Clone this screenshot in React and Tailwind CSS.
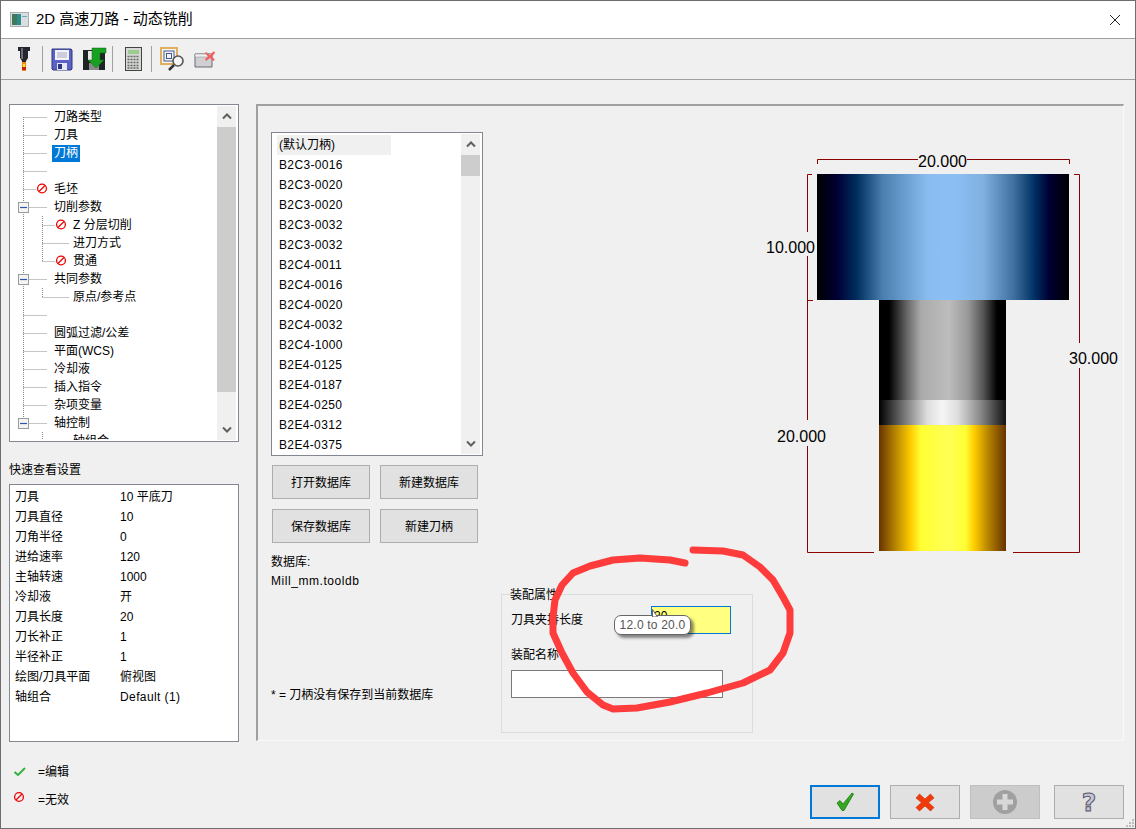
const treeRows = [
  { t: '刀路类型', first: true },
  { t: '刀具' },
  { t: '刀柄', selected: true },
  { t: '' },
  { t: '毛坯', bad: true },
  { t: '切削参数', box: true },
  { t: 'Z 分层切削', sub: true, bad: true, more: true },
  { t: '进刀方式', sub: true, more: true },
  { t: '贯通', sub: true, bad: true },
  { t: '共同参数', box: true },
  { t: '原点/参考点', sub: true },
  { t: '' },
  { t: '圆弧过滤/公差' },
  { t: '平面(WCS)' },
  { t: '冷却液' },
  { t: '插入指令' },
  { t: '杂项变量' },
  { t: '轴控制', box: true, end: true },
  { t: '轴组合', sub: true, tail: true },
];

const tools = ['B2C3-0016', 'B2C3-0020', 'B2C3-0020', 'B2C3-0032', 'B2C3-0032', 'B2C4-0011', 'B2C4-0016', 'B2C4-0020', 'B2C4-0032', 'B2C4-1000', 'B2E4-0125', 'B2E4-0187', 'B2E4-0250', 'B2E4-0312', 'B2E4-0375'];

const quickView = [
  ['刀具', '10 平底刀'],
  ['刀具直径', '10'],
  ['刀角半径', '0'],
  ['进给速率', '120'],
  ['主轴转速', '1000'],
  ['冷却液', '开'],
  ['刀具长度', '20'],
  ['刀长补正', '1'],
  ['半径补正', '1'],
  ['绘图/刀具平面', '俯视图'],
  ['轴组合', 'Default (1)'],
];

function NoEntry({ cx, cy }) {
  return (
    <g fill="none" stroke="#f00000" strokeWidth="1.3">
      <circle cx={cx} cy={cy} r="4.4" />
      <path d={`M${cx - 3} ${cy + 3}L${cx + 3} ${cy - 3}`} />
    </g>
  );
}

function TreeRow({ row }) {
  const width = row.sub ? 62 : 43;
  const dots = { stroke: '#8a8a8a', strokeDasharray: '1 1', fill: 'none' };
  return (
    <div className="flex h-[18px] items-center">
      <svg width={width} height="18" className="shrink-0">
        {!row.tail && <path d={`M12.5 ${row.first ? 9 : 0}V${row.end ? 9 : 18}`} {...dots} />}
        {row.sub ? (
          <>
            <path d={`M31.5 0V${row.more ? 18 : 9}`} {...dots} />
            <path d={`M31.5 9.5H${row.bad ? 44 : 58}`} {...dots} />
            {row.bad && <NoEntry cx={50} cy={8.5} />}
          </>
        ) : (
          <>
            <path d={`M12.5 9.5H${row.bad ? 25 : 36}`} {...dots} />
            {row.bad && <NoEntry cx={31} cy={8.5} />}
            {row.box && (
              <>
                <rect x="7.5" y="4.5" width="10" height="10" fill="#f4f4f4" stroke="#9a9a9a" />
                <path d="M9 9.5H16" stroke="#2f55a8" strokeWidth="1.2" />
              </>
            )}
          </>
        )}
      </svg>
      <span className={row.selected ? '-ml-[2px] bg-[#0078d7] px-[2px] leading-[17px] text-white' : 'whitespace-nowrap'}>{row.t}</span>
    </div>
  );
}

function Chevron({ up }) {
  return (
    <svg width="10" height="7" viewBox="0 0 10 7">
      <path d={up ? 'M1 5.5L5 1.5L9 5.5' : 'M1 1.5L5 5.5L9 1.5'} fill="none" stroke="#606060" strokeWidth="2" />
    </svg>
  );
}

function Scrollbar({ thumbHeight }) {
  return (
    <div className="flex w-[19px] shrink-0 flex-col bg-[#f0f0f0]">
      <div className="flex h-[21px] shrink-0 items-center justify-center"><Chevron up /></div>
      <div className="flex-1">
        <div className={`${thumbHeight} bg-[#cdcdcd]`} />
      </div>
      <div className="flex h-[21px] shrink-0 items-center justify-center"><Chevron /></div>
    </div>
  );
}

function TitleIcon() {
  return (
    <svg width="20" height="18" viewBox="0 0 20 18">
      <rect x="0.5" y="1.5" width="18" height="14" fill="#d9dee0" stroke="#a9adb0" />
      <rect x="2" y="3" width="9" height="11" fill="#2f8a8c" />
      <rect x="2" y="3" width="5" height="11" fill="#3d7a5a" />
      <rect x="12" y="5" width="5" height="1" fill="#68a8b0" />
    </svg>
  );
}

function ToolbarIcons() {
  return (
    <>
      <svg width="14" height="26" viewBox="0 0 14 26" className="ml-[16px]">
        <path d="M1 1H13V5H11V12L9 15V17H5V15L3 12V5H1Z" fill="#26262e" />
        <path d="M5 2V13" stroke="#6a6a78" strokeWidth="2" />
        <rect x="5" y="16" width="4" height="9" fill="#f08a10" />
        <rect x="6" y="18" width="2" height="5" fill="#ffe040" />
        <rect x="5" y="21" width="4" height="3" fill="#c02808" />
      </svg>
      <div className="ml-[11px] h-[26px] w-px bg-[#a0a0a0]" />
      <svg width="22" height="23" viewBox="0 0 22 23" className="ml-[8px]">
        <path d="M1 1H20L21 2V21L20 22H2L1 21Z" fill="#5a62c8" stroke="#30367e" />
        <rect x="4" y="2" width="14" height="10" fill="#f2f2f8" />
        <path d="M6 5H16M6 7H16M6 9H16" stroke="#a8a8c0" />
        <rect x="6" y="15" width="10" height="7" fill="#e8e8f4" />
        <rect x="7" y="16" width="4" height="5" fill="#30367e" />
      </svg>
      <svg width="24" height="24" viewBox="0 0 24 24" className="ml-[10px]">
        <path d="M0 3H22V23H0Z" fill="#1c2424" />
        <rect x="5" y="4" width="12" height="9" fill="#e8e8e8" />
        <rect x="6" y="16" width="10" height="7" fill="#8a8a8a" />
        <path d="M9 1H23V6H17V13H21L13 21L5 13H9Z" fill="#18a020" stroke="#0c6a18" strokeWidth="0.5" />
      </svg>
      <div className="ml-[5px] h-[26px] w-px bg-[#a0a0a0]" />
      <svg width="17" height="24" viewBox="0 0 17 24" className="ml-[12px]">
        <rect x="0.5" y="0.5" width="16" height="23" fill="#d6d8d4" stroke="#444" />
        <rect x="3" y="3" width="11" height="4" fill="#9ccb90" />
        <path d="M2.5 9.5H14.5M2.5 12.5H14.5M2.5 15.5H14.5M2.5 18.5H14.5M2.5 21H14.5" stroke="#666" strokeWidth="1.5" strokeDasharray="2 1" />
      </svg>
      <div className="ml-[9px] h-[26px] w-px bg-[#a0a0a0]" />
      <svg width="25" height="25" viewBox="0 0 25 25" className="ml-[8px]">
        <rect x="1" y="1" width="16" height="16" fill="#f4f4f4" stroke="#e0b060" strokeWidth="2" />
        <rect x="4" y="4" width="10" height="10" fill="none" stroke="#445a8a" />
        <rect x="6.5" y="6.5" width="5" height="5" fill="none" stroke="#445a8a" />
        <path d="M14 18L9 23" stroke="#333" strokeWidth="2.5" />
        <circle cx="18" cy="14" r="5" fill="#f4f4f4" stroke="#555" strokeWidth="1.6" />
      </svg>
      <svg width="22" height="18" viewBox="0 0 22 18" className="ml-[9px]">
        <path d="M1 4H18V17H1Z" fill="#d0d0d4" stroke="#6a6a70" />
        <path d="M1 4H18V7H1Z" fill="#f0f0f2" stroke="#8a8a90" strokeWidth="0.5" />
        <path d="M12 2L16 5L20 1L21 3L18 6.5L21 10L19 11L16 8L12 11L11 9L14 6.5L11 3Z" fill="#f06060" />
      </svg>
    </>
  );
}

function DataButton({ label }) {
  return (
    <button className="h-[34px] w-[98px] border border-[#adadad] bg-[#e1e1e1] pt-[2px] text-[12px]">{label}</button>
  );
}

function ToolDrawing() {
  const stopsOf = (list) => list.map(([o, c]) => <stop key={o} offset={o} stopColor={c} />);
  return (
    <svg width="360" height="410" className="ml-auto mr-px shrink-0">
      <defs>
        <linearGradient id="head">
          {stopsOf([[0, '#000'], [0.08, '#000033'], [0.16, '#003060'], [0.26, '#4a7fb0'], [0.44, '#8abcf0'], [0.54, '#8cc0f5'], [0.66, '#80b0e0'], [0.78, '#4070a0'], [0.86, '#003366'], [0.92, '#000033'], [1, '#000']])}
        </linearGradient>
        <linearGradient id="shank">
          {stopsOf([[0, '#000'], [0.08, '#000'], [0.22, '#666'], [0.33, '#aaa'], [0.55, '#bdbdbd'], [0.7, '#999'], [0.82, '#555'], [0.93, '#000'], [1, '#000']])}
        </linearGradient>
        <linearGradient id="band">
          {stopsOf([[0, '#000'], [0.2, '#777'], [0.38, '#ddd'], [0.5, '#f5f5f5'], [0.62, '#ddd'], [0.8, '#888'], [1, '#111']])}
        </linearGradient>
        <linearGradient id="gold">
          {stopsOf([[0, '#663300'], [0.12, '#b07f00'], [0.25, '#ffcc00'], [0.33, '#ffff33'], [0.55, '#ffff55'], [0.68, '#ffff33'], [0.75, '#ffcc00'], [0.88, '#aa7700'], [1, '#663300']])}
        </linearGradient>
      </defs>
      <rect x="57" y="24" width="252" height="126" fill="url(#head)" />
      <rect x="119" y="150" width="127" height="100" fill="url(#shank)" />
      <rect x="119" y="250" width="127" height="25" fill="url(#band)" />
      <rect x="119" y="275" width="127" height="126" fill="url(#gold)" />
      <g fill="none" stroke="#8b0000">
        <path d="M57.5 14V9.5H158M207 9.5H309.5V14" />
        <path d="M52 24.5H47.5V82M47.5 106V270M47.5 296V402.5H114" />
        <path d="M47.5 150.5H53" />
        <path d="M314 24.5H319.5V193M319.5 218V402.5H253" />
      </g>
      <g className="fill-black text-[16px]">
        <text x="158" y="17">20.000</text>
        <text x="6" y="103">10.000</text>
        <text x="17" y="292">20.000</text>
        <text x="309" y="214">30.000</text>
      </g>
    </svg>
  );
}

function RedCircle() {
  return (
    <svg width="1136" height="829" className="pointer-events-none absolute left-[-1px] top-[-1px]">
      <path
        d="M685 563L670 560L640 558L613 560L590 566L573 573L562 585L555 600L553 617L553 633L562 653L573 673L587 692L603 705L613 709L637 708L670 702L707 693L743 683L770 670L783 653L790 633L790 610L783 597L773 580L760 567L743 555L723 551L693 550"
        fill="none"
        stroke="#fe3c3c"
        strokeWidth="7"
        strokeLinecap="round"
        strokeLinejoin="round"
      />
    </svg>
  );
}

export default function App() {
  return (
    <div className="relative flex h-[829px] w-[1136px] flex-col overflow-hidden border border-[#6e6e6e] bg-[#f0f0f0] font-['Liberation_Sans','Noto_Sans_CJK_SC',sans-serif] text-[12px] text-black">
      {/* 标题栏 */}
      <div className="flex h-[37px] shrink-0 items-center bg-white pl-[9px] pr-[14px]">
        <TitleIcon />
        <span className="ml-[6px] text-[15px]">2D 高速刀路 - 动态铣削</span>
        <svg width="12" height="12" className="ml-auto">
          <path d="M1 1L11 11M11 1L1 11" stroke="#222" fill="none" />
        </svg>
      </div>

      {/* 工具栏 */}
      <div className="flex h-[42px] shrink-0 items-center border-y border-[#a0a0a0]">
        <ToolbarIcons />
      </div>

      <div className="flex flex-1 pl-[8px] pt-[24px]">
        {/* 左栏 */}
        <div className="flex w-[230px] shrink-0 flex-col">
          <div className="flex h-[338px] border border-[#828790] bg-white py-px pl-px pr-[2px]">
            <div className="flex-1 overflow-hidden pt-[2px] leading-[18px]">
              {treeRows.map((row, i) => <TreeRow key={i} row={row} />)}
            </div>
            <Scrollbar thumbHeight="h-[265px]" />
          </div>
          <div className="mt-[20px] h-[22px] leading-[16px]">快速查看设置</div>
          <div className="h-[258px] border border-[#828790] bg-white pt-[2px]">
            {quickView.map(([k, v]) => (
              <div key={k} className="flex h-[20px] items-center pl-[5px]">
                <span className="w-[105px] shrink-0">{k}</span>
                <span className={k === '轴组合' ? 'tracking-[0.4px]' : ''}>{v}</span>
              </div>
            ))}
          </div>
          <div className="ml-[5px] mt-[21px] flex h-[18px] items-center gap-[12px]">
            <svg width="12" height="10" viewBox="0 0 12 10">
              <path d="M0.5 5L4 8L11 1" fill="none" stroke="#35b040" strokeWidth="2" />
            </svg>
            <span>=编辑</span>
          </div>
          <div className="ml-[3px] mt-[10px] flex h-[18px] items-center gap-[12px]">
            <svg width="14" height="14" className="-mt-[6px]"><NoEntry cx={7} cy={7} /></svg>
            <span>=无效</span>
          </div>
        </div>

        {/* 右栏 */}
        <div className="ml-[17px] flex w-[868px] shrink-0 flex-col">
          <div className="flex h-[637px] border-b border-l-2 border-r border-t-2 border-b-[#fafafa] border-l-[#a0a0a0] border-r-[#fafafa] border-t-[#a0a0a0] pl-[13px] pr-[2px] pt-[26px]">
            <div className="flex w-[230px] shrink-0 flex-col">
              <div className="flex h-[324px] w-[212px] border border-[#828790] bg-white py-px pl-px pr-[2px]">
                <div className="flex-1 overflow-hidden pl-[4px] pt-px tracking-[0.35px]">
                  <div className="flex h-[20px] w-[114px] items-center bg-[#f0f0f0] pl-[2px] tracking-normal">(默认刀柄)</div>
                  {tools.map((name, i) => (
                    <div key={i} className="flex h-[20px] items-center pl-[2px]">{name}</div>
                  ))}
                </div>
                <Scrollbar thumbHeight="h-[21px]" />
              </div>
              <div className="ml-px mt-[9px] grid w-[206px] grid-cols-2 gap-x-[10px] gap-y-[10px]">
                <DataButton label="打开数据库" />
                <DataButton label="新建数据库" />
                <DataButton label="保存数据库" />
                <DataButton label="新建刀柄" />
              </div>
              <div className="mt-[10px] leading-[19px]">
                <div>数据库:</div>
                <div className="tracking-[0.55px]">Mill_mm.tooldb</div>
              </div>
              <div className="mt-[95px]">* = 刀柄没有保存到当前数据库</div>
            </div>

            <div className="flex min-w-0 flex-1 flex-col pt-[18px]">
              <ToolDrawing />
              <div className="relative mt-[34px] h-[139px] w-[252px] border border-[#dcdcdc]">
                <span className="absolute -top-[9px] left-[8px] bg-[#f0f0f0]">装配属性</span>
                <div className="mt-[11px] flex h-[28px] items-center pl-[9px]">
                  <span className="w-[140px]">刀具夹持长度</span>
                  <div className="h-[28px] w-[80px] border border-[#0078d7] bg-[#ffff80] pl-[2px] leading-[18px]">20</div>
                </div>
                <div className="ml-[9px] mt-[13px] leading-[16px]">装配名称</div>
                <div className="ml-[9px] mt-[7px] h-[28px] w-[212px] border border-[#7a7a7a] bg-white" />
              </div>
            </div>
          </div>

          {/* 底部按钮 */}
          <div className="mt-[44px] flex justify-end">
            <button className="flex h-[34px] w-[70px] items-center justify-center border-2 border-[#0078d7] bg-[#e1e1e1]">
              <svg width="18" height="20" viewBox="0 0 18 20">
                <path d="M1 11L4 8.5L7 12L16 1L17.5 2L8 18.5H6Z" fill="#35a820" stroke="#137a10" strokeWidth="0.8" />
              </svg>
            </button>
            <button className="ml-[10px] flex h-[34px] w-[70px] items-center justify-center border border-[#adadad] bg-[#e1e1e1]">
              <svg width="20" height="19" viewBox="0 0 20 19">
                <path d="M1 5L4.5 1L10 6L15.5 1L19 5L13.5 9.5L19 14.5L15.5 18L10 13L4.5 18L1 14.5L6.5 9.5Z" fill="#f03c0a" stroke="#c92a06" strokeWidth="0.6" />
              </svg>
            </button>
            <button className="ml-[10px] flex h-[34px] w-[70px] items-center justify-center border border-[#bfbfbf] bg-[#cccccc]">
              <svg width="24" height="24" viewBox="0 0 24 24">
                <circle cx="12" cy="12" r="12" fill="#a0a0a0" />
                <path d="M12 4V20M4 12H20" stroke="#d8d8d8" strokeWidth="5" />
              </svg>
            </button>
            <button className="ml-[14px] flex h-[34px] w-[70px] items-center justify-center border border-[#adadad] bg-[#e1e1e1]">
              <span className="font-['DejaVu_Sans',sans-serif] text-[25px] font-bold leading-none text-[#c4c4d4] [-webkit-text-stroke:1px_#55556a]">?</span>
            </button>
          </div>
        </div>
      </div>

      <RedCircle />

      {/* 提示框 */}
      <div className="absolute left-[613px] top-[614px] flex h-[20px] w-[77px] items-center justify-center rounded-[7px] border border-[#666] bg-white text-[12px] tracking-[0.2px] text-[#555] shadow-[3px_3px_3px_rgba(0,0,0,0.45)]">
        <svg width="6" height="8" className="absolute left-[37px] top-[-7px]">
          <path d="M0.5 0.5V8H5.5Z" fill="#fff" stroke="#666" />
        </svg>
        12.0 to 20.0
      </div>

      {/* 尺寸手柄 */}
      <div className="absolute bottom-[1px] right-[1px] grid grid-cols-3 gap-px">
        <span className="size-[2px]" /><span className="size-[2px]" /><span className="size-[2px] bg-[#bcbcbc]" />
        <span className="size-[2px]" /><span className="size-[2px] bg-[#bcbcbc]" /><span className="size-[2px] bg-[#bcbcbc]" />
        <span className="size-[2px] bg-[#bcbcbc]" /><span className="size-[2px] bg-[#bcbcbc]" /><span className="size-[2px] bg-[#bcbcbc]" />
      </div>
    </div>
  );
}
